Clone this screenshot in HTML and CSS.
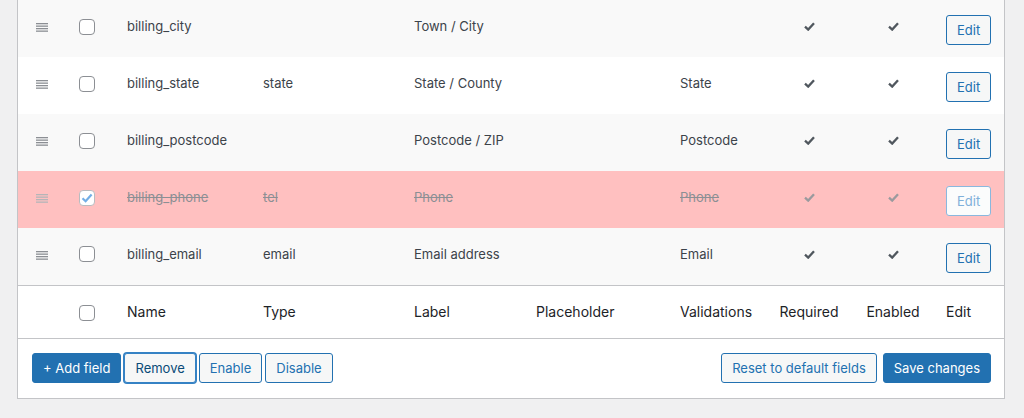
FILE: index.html
```html
<!DOCTYPE html>
<html lang="en">
<head>
<meta charset="UTF-8" />
<title>Checkout fields</title>
<link rel="stylesheet" href="styles.css">
</head>
<body>
<div class="panel">
    <table class="fields">
        <colgroup>
            <col class="c-handle"><col class="c-check"><col class="c-name"><col class="c-type"><col class="c-label">
            <col class="c-ph"><col class="c-valid"><col class="c-req"><col class="c-en"><col class="c-edit">
        </colgroup>
        <tbody>
            <tr class="alt">
                <td class="handle"><svg width="12" height="9" viewBox="0 0 12 9"><rect y="0" width="12" height="1.3"/><rect y="2.5" width="12" height="1.3"/><rect y="5" width="12" height="1.3"/><rect y="7.5" width="12" height="1.3"/></svg></td>
                <td class="check"><span class="box"></span></td>
                <td><span class="txt">billing_city</span></td>
                <td></td>
                <td><span class="txt">Town / City</span></td>
                <td></td>
                <td></td>
                <td class="mid"><svg class="tick" width="11" height="9" viewBox="0 0 11 9"><path d="M1 4.6 L4.2 7.6 L10 1.2"/></svg></td>
                <td class="mid"><svg class="tick" width="11" height="9" viewBox="0 0 11 9"><path d="M1 4.6 L4.2 7.6 L10 1.2"/></svg></td>
                <td class="edit"><button class="btn">Edit</button></td>
            </tr>
            <tr>
                <td class="handle"><svg width="12" height="9" viewBox="0 0 12 9"><rect y="0" width="12" height="1.3"/><rect y="2.5" width="12" height="1.3"/><rect y="5" width="12" height="1.3"/><rect y="7.5" width="12" height="1.3"/></svg></td>
                <td class="check"><span class="box"></span></td>
                <td><span class="txt">billing_state</span></td>
                <td><span class="txt">state</span></td>
                <td><span class="txt">State / County</span></td>
                <td></td>
                <td><span class="txt">State</span></td>
                <td class="mid"><svg class="tick" width="11" height="9" viewBox="0 0 11 9"><path d="M1 4.6 L4.2 7.6 L10 1.2"/></svg></td>
                <td class="mid"><svg class="tick" width="11" height="9" viewBox="0 0 11 9"><path d="M1 4.6 L4.2 7.6 L10 1.2"/></svg></td>
                <td class="edit"><button class="btn">Edit</button></td>
            </tr>
            <tr class="alt">
                <td class="handle"><svg width="12" height="9" viewBox="0 0 12 9"><rect y="0" width="12" height="1.3"/><rect y="2.5" width="12" height="1.3"/><rect y="5" width="12" height="1.3"/><rect y="7.5" width="12" height="1.3"/></svg></td>
                <td class="check"><span class="box"></span></td>
                <td><span class="txt">billing_postcode</span></td>
                <td></td>
                <td><span class="txt">Postcode / ZIP</span></td>
                <td></td>
                <td><span class="txt">Postcode</span></td>
                <td class="mid"><svg class="tick" width="11" height="9" viewBox="0 0 11 9"><path d="M1 4.6 L4.2 7.6 L10 1.2"/></svg></td>
                <td class="mid"><svg class="tick" width="11" height="9" viewBox="0 0 11 9"><path d="M1 4.6 L4.2 7.6 L10 1.2"/></svg></td>
                <td class="edit"><button class="btn">Edit</button></td>
            </tr>
            <tr class="disabled">
                <td class="handle"><svg width="12" height="9" viewBox="0 0 12 9"><rect y="0" width="12" height="1.3"/><rect y="2.5" width="12" height="1.3"/><rect y="5" width="12" height="1.3"/><rect y="7.5" width="12" height="1.3"/></svg></td>
                <td class="check"><span class="box checked"><svg width="12" height="10" viewBox="0 0 12 10"><path d="M1.5 5.2 L4.6 8.2 L10.6 1.4"/></svg></span></td>
                <td><span class="txt">billing_phone</span></td>
                <td><span class="txt">tel</span></td>
                <td><span class="txt">Phone</span></td>
                <td></td>
                <td><span class="txt">Phone</span></td>
                <td class="mid"><svg class="tick" width="11" height="9" viewBox="0 0 11 9"><path d="M1 4.6 L4.2 7.6 L10 1.2"/></svg></td>
                <td class="mid"><svg class="tick" width="11" height="9" viewBox="0 0 11 9"><path d="M1 4.6 L4.2 7.6 L10 1.2"/></svg></td>
                <td class="edit"><button class="btn">Edit</button></td>
            </tr>
            <tr class="alt">
                <td class="handle"><svg width="12" height="9" viewBox="0 0 12 9"><rect y="0" width="12" height="1.3"/><rect y="2.5" width="12" height="1.3"/><rect y="5" width="12" height="1.3"/><rect y="7.5" width="12" height="1.3"/></svg></td>
                <td class="check"><span class="box"></span></td>
                <td><span class="txt">billing_email</span></td>
                <td><span class="txt">email</span></td>
                <td><span class="txt">Email address</span></td>
                <td></td>
                <td><span class="txt">Email</span></td>
                <td class="mid"><svg class="tick" width="11" height="9" viewBox="0 0 11 9"><path d="M1 4.6 L4.2 7.6 L10 1.2"/></svg></td>
                <td class="mid"><svg class="tick" width="11" height="9" viewBox="0 0 11 9"><path d="M1 4.6 L4.2 7.6 L10 1.2"/></svg></td>
                <td class="edit"><button class="btn">Edit</button></td>
            </tr>
        </tbody>
        <tfoot>
            <tr>
                <th></th>
                <th class="check"><span class="box"></span></th>
                <th>Name</th>
                <th>Type</th>
                <th>Label</th>
                <th>Placeholder</th>
                <th>Validations</th>
                <th class="mid">Required</th>
                <th class="mid">Enabled</th>
                <th class="edit">Edit</th>
            </tr>
        </tfoot>
    </table>
    <div class="actions">
        <div class="group">
            <button class="btn primary">+ Add field</button>
            <button class="btn focus">Remove</button>
            <button class="btn">Enable</button>
            <button class="btn">Disable</button>
        </div>
        <div class="group">
            <button class="btn">Reset to default fields</button>
            <button class="btn primary">Save changes</button>
        </div>
    </div>
</div>
</body>
</html>
```

FILE: styles.css
```css
body {
    margin: 0;
    padding: 0 0 0 17px;
    background-color: #f0f0f1;
    font-family: Inter, 'Noto Sans', sans-serif;
    color: #3c434a;
    font-size: 13px;
}
.panel {
    width: 986px;
    background-color: #fff;
    border: 1px solid #c3c4c7;
    border-top: none;
}
.fields {
    width: 100%;
    border-collapse: collapse;
    table-layout: fixed;
}
.c-handle { width: 48px; }
.c-check { width: 61px; }
.c-name { width: 136px; }
.c-type { width: 151px; }
.c-label { width: 122px; }
.c-ph { width: 144px; }
.c-valid { width: 90px; }
.c-req { width: 78px; }
.c-en { width: 90px; }
.c-edit { width: 66px; }
.fields td {
    height: 57px;
    padding: 0 0 5px 0;
    vertical-align: middle;
    text-align: left;
    box-sizing: border-box;
}
.fields tr.alt td {
    background-color: #f9f9f9;
}
.fields tr.disabled td {
    background-color: #ffc0c0;
}
.fields td.handle {
    text-align: center;
    padding-top: 2px;
}
.handle svg {
    fill: #8c8f94;
    display: inline-block;
}
.check {
    padding-left: 13px !important;
}
.box {
    display: inline-block;
    width: 14px;
    height: 14px;
    border: 1px solid #8c8f94;
    border-radius: 4px;
    background-color: #fff;
    vertical-align: middle;
    position: relative;
}
.box svg {
    position: absolute;
    left: 1px;
    top: 2px;
    fill: none;
    stroke: #3582c4;
    stroke-width: 2.2;
}
.fields .mid {
    text-align: center;
}
.tick {
    fill: none;
    stroke: #50575e;
    stroke-width: 2.3;
    display: inline-block;
}
.fields td.edit {
    padding: 3px 0 0 8px;
}
.fields tfoot th {
    height: 53px;
    border-top: 1px solid #c3c4c7;
    font-weight: 400;
    font-size: 14px;
    color: #1d2327;
    text-align: left;
    vertical-align: middle;
    padding: 0;
    box-sizing: border-box;
}
.fields tfoot th.mid {
    text-align: center;
}
.fields tfoot th.edit {
    padding-left: 8px;
}
.btn {
    font-family: inherit;
    font-size: 13px;
    height: 30px;
    padding: 0 10px;
    border: 1px solid #2271b1;
    border-radius: 3px;
    background-color: #f6f7f7;
    color: #2271b1;
    cursor: pointer;
}
.btn.primary {
    background-color: #2271b1;
    color: #fff;
}
.btn.focus {
    color: #0a4b78;
    border-color: #3582c4;
    box-shadow: 0 0 0 1px #3582c4;
}
tr.disabled .txt {
    color: #8c8f94;
    text-decoration: line-through;
}
tr.disabled .handle svg {
    fill: #b5b5b8;
}
tr.disabled .tick {
    stroke: #9a9a9e;
}
tr.disabled .box {
    border-color: #b9bcc0;
}
tr.disabled .box svg {
    stroke: #72aee6;
}
tr.disabled .btn {
    background-color: #fbfcfc;
    border-color: #8ab8de;
    color: #80b0da;
}
.actions {
    display: flex;
    justify-content: space-between;
    border-top: 1px solid #c3c4c7;
    padding: 14px 13px 15px 14px;
}
.group {
    display: flex;
    gap: 3px;
}
.group:last-child {
    gap: 6px;
}
```
